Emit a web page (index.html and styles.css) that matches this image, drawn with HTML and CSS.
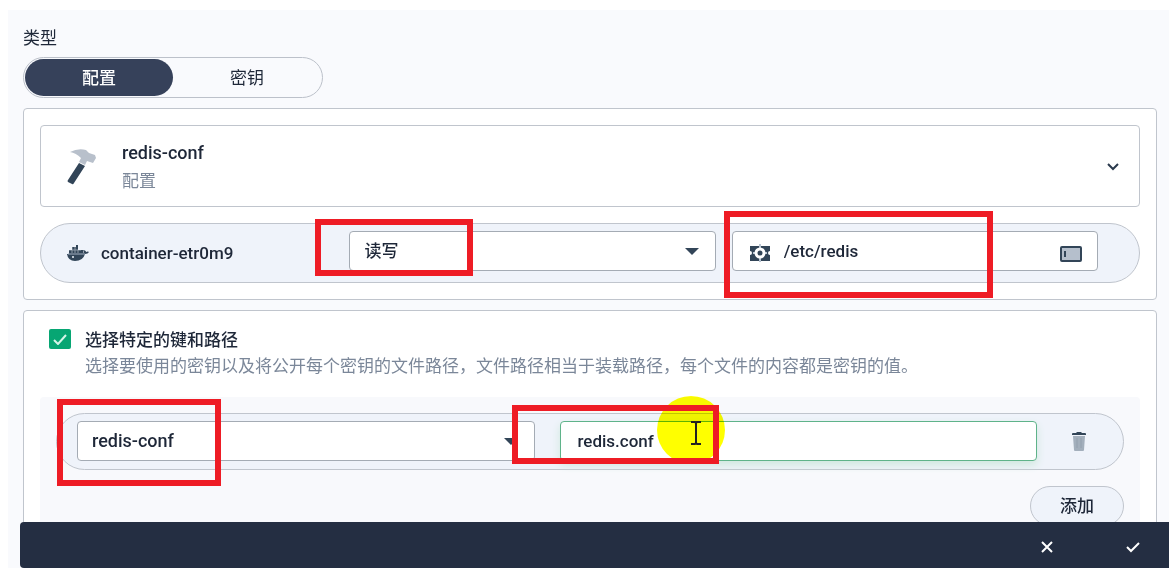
FILE: index.html
```
<!DOCTYPE html>
<html lang="zh-CN">
  <head>
    <meta charset="UTF-8" />
    <meta name="viewport" content="width=device-width, initial-scale=1" />
    <title>配置</title>
    <link rel="stylesheet" href="styles.css">
  </head>
  <body>
    <div class="dialog">
      <main class="dialog-body">
        <fieldset class="type-field">
          <legend class="type-legend">类型</legend>
          <div class="segmented">
            <label class="segment"><input type="radio" name="type" checked /><span>配置</span></label>
            <label class="segment"><input type="radio" name="type" /><span>密钥</span></label>
          </div>
        </fieldset>

        <section class="panel mount-panel">
          <button class="resource-card" type="button">
            <svg class="hammer" width="34" height="38" viewBox="0 0 34 38">
              <path d="M14 15l6 3L9 35q-1 2-2 1l-4-2q-1-1 0-2z" fill="#324558" />
              <path d="M5 4Q13 0 21 2l3 3 6 2 1 3-3 5-6-2-2 4-6-3 2-4Q11 5 5 4z" fill="#b8c0cb" />
            </svg>
            <span class="resource-text">
              <span class="resource-name">redis-conf</span>
              <span class="resource-type">配置</span>
            </span>
            <svg class="chevron" width="14" height="10" viewBox="0 0 14 10">
              <path d="M2 2l5 5 5-5" fill="none" stroke="#2b3a4d" stroke-width="2" />
            </svg>
          </button>

          <div class="pill mount-row">
            <div class="container-name">
              <svg width="22" height="18" viewBox="0 0 22 18">
                <path d="M0 10h15c2-1 2-2 1-4 2 0 3 1 3 2q2-1 3 0-1 2-4 2-2 7-10 7-7 0-8-7z" fill="#324558" />
                <path d="M2 6h14v4H2zM5 3h6v3H5zM9 1h2v2H9z" fill="#324558" />
                <path d="M2 6h12M5 3v6M8 3v6M11 6v3" stroke="#eff3fa" stroke-width="1" opacity="0.5" />
                <path d="M1 10h17" stroke="#a3b1c1" stroke-width="1" />
                <circle cx="6" cy="13" r="1" fill="#eff3fa" />
              </svg>
              <span>container-etr0m9</span>
            </div>
            <div class="field">
              <select class="control" aria-label="读写">
                <option>读写</option>
              </select>
              <svg class="caret" width="14" height="7" viewBox="0 0 14 7"><path d="M0 0h14L7 7z" fill="#324558" /></svg>
              <span class="mark mark-access"></span>
            </div>
            <div class="field">
              <svg class="path-icon" width="20" height="20" viewBox="0 0 20 20">
                <path d="M0 3h20v5q-2 0-2 2t2 2v6H0v-6q2 0 2-2T0 8z" fill="#324558" />
                <path d="M10 1v18M3 10h14" stroke="#b8c4d2" stroke-width="2" />
                <circle cx="10" cy="10" r="4" fill="#324558" stroke="#fff" stroke-width="3" />
              </svg>
              <input class="control path-input" type="text" value="/etc/redis" aria-label="/etc/redis" />
              <svg class="box-icon" width="22" height="16" viewBox="0 0 22 16">
                <rect x="1" y="1" width="20" height="14" rx="1" fill="#b5bfcc" stroke="#324558" stroke-width="2" />
                <path d="M5 5v6" stroke="#324558" stroke-width="2" />
              </svg>
              <span class="mark mark-path"></span>
            </div>
          </div>
        </section>

        <section class="panel keys-panel">
          <div class="keys-option">
            <span class="check">
              <input type="checkbox" id="pick-keys" aria-describedby="pick-keys-hint" checked />
              <svg width="14" height="12" viewBox="0 0 14 12"><path d="M1 7l4 4 8-9" fill="none" stroke="#d5f5e8" stroke-width="2" /></svg>
            </span>
            <div class="keys-text">
              <label class="keys-title" for="pick-keys">选择特定的键和路径</label>
              <p class="keys-hint" id="pick-keys-hint">选择要使用的密钥以及将公开每个密钥的文件路径，文件路径相当于装载路径，每个文件的内容都是密钥的值。</p>
            </div>
          </div>

          <div class="keys-list">
            <div class="pill key-row">
              <div class="field">
                <select class="control key-select" aria-label="redis-conf">
                  <option>redis-conf</option>
                </select>
                <svg class="caret" width="14" height="7" viewBox="0 0 14 7"><path d="M0 0h14L7 7z" fill="#324558" /></svg>
                <span class="mark mark-key"></span>
              </div>
              <div class="field">
                <input class="control key-input" type="text" value="redis.conf" aria-label="redis.conf" />
                <span class="pointer-halo"></span>
                <span class="mark mark-file"></span>
                <svg class="pointer" width="12" height="24" viewBox="0 0 12 24">
                  <path d="M1 1h4l1 1 1-1h4M6 2v20M1 23h4l1-1 1 1h4" fill="none" stroke="#222" stroke-width="2" />
                </svg>
              </div>
              <button class="delete-button" type="button" aria-label="删除">
                <svg width="14" height="19" viewBox="0 0 14 19">
                  <path d="M1 4h12l-1 14q0 1-1 1H3q-1 0-1-1z" fill="#a3afbc" />
                  <path d="M5 6v10M9 6v10" stroke="#93a0ae" stroke-width="1" />
                  <path d="M0 2q0-1 1-1h3l1-1h4l1 1h3q1 0 1 1v1H0z" fill="#324558" />
                </svg>
              </button>
            </div>
            <button class="add-button" type="button">添加</button>
          </div>
        </section>
      </main>

      <footer class="dialog-footer">
        <button type="button" aria-label="取消">
          <svg width="14" height="14" viewBox="0 0 14 14"><path d="M2 2l10 10M12 2L2 12" fill="none" stroke="#fff" stroke-width="2" /></svg>
        </button>
        <button type="button" aria-label="确定">
          <svg width="14" height="14" viewBox="0 0 14 14"><path d="M1 7l4 4 8-8" fill="none" stroke="#fff" stroke-width="2" /></svg>
        </button>
      </footer>
    </div>
  </body>
</html>
```

FILE: styles.css
```
* {
  box-sizing: border-box;
}

body {
  margin: 0;
  background: #fff;
  color: #1e2738;
  font-family: Roboto, "Noto Sans CJK SC", sans-serif;
  font-size: 17px;
  line-height: 24px;
}

button,
input,
select {
  font: inherit;
  color: inherit;
}

button {
  cursor: pointer;
}

svg {
  display: block;
  flex: none;
}

.dialog {
  display: flex;
  flex-direction: column;
  height: 100vh;
  padding: 10px 0 0 8px;
  overflow: hidden;
  background: #f9fafd;
  background-clip: content-box;
}

.dialog-body {
  flex: 1;
  min-height: 0;
  padding: 16px 12px 0 15px;
  overflow: hidden;
}

/* 类型切换 */
.type-field {
  margin: 0 0 10px;
  padding: 0;
  border: 0;
}

.type-legend {
  padding: 0;
  margin-bottom: 7px;
}

.segmented {
  display: flex;
  width: 300px;
  height: 41px;
  padding: 1px;
  border: 1px solid #bcc1ca;
  border-radius: 21px;
}

.segment {
  position: relative;
  flex: 1;
  cursor: pointer;
}

.segment input {
  position: absolute;
  opacity: 0;
}

.segment span {
  display: flex;
  align-items: center;
  justify-content: center;
  height: 100%;
  border-radius: 19px;
}

.segment input:checked + span {
  background: #36415a;
  color: #fff;
  font-weight: 500;
}

/* 面板 */
.panel {
  border: 1px solid #c0c5cd;
  border-radius: 4px;
  background: #fff;
}

.mount-panel {
  padding: 16px;
  margin-bottom: 10px;
}

.resource-card {
  display: flex;
  align-items: center;
  width: 100%;
  padding: 13px 19px 11px 24px;
  margin-bottom: 16px;
  border: 1px solid #c0c5cd;
  border-radius: 4px;
  background: #fff;
  text-align: left;
}

.resource-text {
  flex: 1;
  margin-left: 23px;
}

.resource-name,
.resource-type {
  display: block;
  line-height: 28px;
}

.resource-name,
.container-name,
.control {
  font-weight: 500;
}

.resource-name,
.key-select {
  font-size: 18px;
}

.resource-type,
.keys-hint {
  color: #7b8799;
}

.pill {
  display: grid;
  align-items: center;
  border: 1px solid #c0c5cd;
  border-radius: 30px;
  background: #eff3fa;
}

.mount-row {
  grid-template-columns: 8fr 11fr 11fr;
  gap: 16px;
  height: 60px;
  padding: 0 41px 4px 26px;
}

.container-name {
  display: flex;
  align-items: center;
  gap: 12px;
  padding-top: 4px;
}

.field {
  position: relative;
}

.control {
  display: block;
  width: 100%;
  height: 40px;
  padding: 0 14px;
  border: 1px solid #a4abb4;
  border-radius: 4px;
  background: #fff;
  outline: 0;
  appearance: none;
}

.caret {
  position: absolute;
  top: 17px;
  right: 17px;
  pointer-events: none;
}

.path-input {
  padding: 0 50px 0 51px;
}

.path-icon {
  position: absolute;
  top: 12px;
  left: 18px;
}

.box-icon {
  position: absolute;
  top: 15px;
  right: 16px;
}

/* 键和路径 */
.keys-panel {
  padding: 16px;
}

.keys-option {
  display: flex;
  gap: 14px;
  padding-left: 9px;
  margin-bottom: 18px;
}

.check {
  display: grid;
  flex: none;
  align-self: flex-start;
  place-items: center;
  width: 22px;
  height: 20px;
  margin-top: 2px;
}

.check input,
.check svg {
  grid-area: 1 / 1;
}

.check input {
  width: 100%;
  height: 100%;
  margin: 0;
  border-radius: 2px;
  background: #07a673;
  appearance: none;
}

.check svg {
  z-index: 1;
  pointer-events: none;
}

.keys-title,
.keys-hint {
  display: block;
  margin: 0;
  line-height: 26px;
}

.keys-title {
  font-weight: 500;
}

.keys-list {
  display: flex;
  flex-direction: column;
  padding: 16px;
  border-radius: 4px;
  background: #f8f9fc;
}

.key-row {
  grid-template-columns: 458fr 476fr 34px;
  gap: 25px;
  height: 57px;
  padding: 0 27px 1px 20px;
  margin-bottom: 16px;
}

.key-input {
  padding: 0 16px;
  border-color: #5fb38a;
  box-shadow: 0 4px 8px #cfe8de;
}

.delete-button {
  display: grid;
  place-items: center;
  height: 34px;
  padding: 0;
  border: 0;
  background: none;
}

.add-button {
  align-self: flex-end;
  width: 94px;
  height: 40px;
  border: 1px solid #c0c5cd;
  border-radius: 20px;
  background: #eff3fa;
  font-weight: 500;
}

/* 底部操作栏 */
.dialog-footer {
  display: flex;
  justify-content: flex-end;
  gap: 46px;
  height: 46px;
  flex: none;
  margin-left: 12px;
  padding-right: 16px;
  border-radius: 4px 0 0 4px;
  background: #242e42;
}

.dialog-footer button {
  display: grid;
  place-items: center;
  width: 40px;
  padding: 4px 0 0;
  border: 0;
  background: none;
}

/* 红框标注 */
.mark {
  position: absolute;
  z-index: 2;
  border: 6px solid #ee1c25;
  pointer-events: none;
}

.mark-access {
  top: -12px;
  left: -34px;
  width: 158px;
  height: 57px;
}

.mark-path {
  top: -20px;
  left: -8px;
  width: 269px;
  height: 87px;
}

.mark-key {
  top: -22px;
  left: -20px;
  width: 164px;
  height: 87px;
}

.mark-file {
  top: -16px;
  left: -48px;
  width: 207px;
  height: 59px;
}

.pointer-halo {
  position: absolute;
  top: -25px;
  left: 97px;
  width: 68px;
  height: 68px;
  border-radius: 50%;
  background: #ff0;
  mix-blend-mode: multiply;
  pointer-events: none;
}

.pointer {
  position: absolute;
  z-index: 3;
  top: 0;
  left: 130px;
  pointer-events: none;
}
```
